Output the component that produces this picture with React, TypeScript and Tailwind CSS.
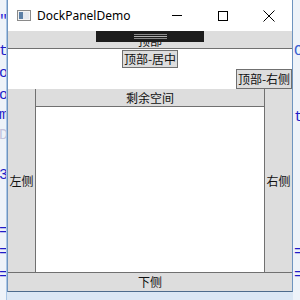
const cjk = "font-['Microsoft_YaHei','Noto_Sans_CJK_SC',sans-serif]"

function Btn({ label, className = '' }: { label: string; className?: string }) {
  return (
    <div
      className={`flex items-center justify-center bg-[#dddddd] text-[12px] leading-none text-[#111] ${cjk} ${className}`}
    >
      {label}
    </div>
  )
}

function CodeStrip({ side }: { side: 'left' | 'right' }) {
  const bits =
    side === 'left'
      ? [
          { t: '"', y: 14, c: 'text-[#2b2bd6]' },
          { t: 't', y: 44, c: 'text-[#1e1ec8]' },
          { t: 'o', y: 66, c: 'text-[#1e1ec8]' },
          { t: 'o', y: 88, c: 'text-[#1e1ec8]' },
          { t: 'm', y: 108, c: 'text-[#1e1ec8]' },
          { t: 'D', y: 128, c: 'text-[#c4c4dc]' },
          { t: '3', y: 168, c: 'text-[#1e1ec8]' },
          { t: '=', y: 224, c: 'text-[#1e1ec8]' },
          { t: '=', y: 245, c: 'text-[#1e1ec8]' },
          { t: '=', y: 268, c: 'text-[#1e1ec8]' },
        ]
      : [
          { t: 'O', y: 44, c: 'text-[#3a5fd0]' },
          { t: 't', y: 110, c: 'text-[#1e1ec8]' },
          { t: '=', y: 245, c: 'text-[#1e1ec8]' },
          { t: '=', y: 268, c: 'text-[#1e1ec8]' },
        ]
  return (
    <div
      className={`relative h-[300px] w-[7px] overflow-hidden bg-[#eef3f9] ${
        side === 'left' ? 'border-r border-[#a9c6e6]' : ''
      }`}
    >
      {bits.map((b, i) => (
        <span
          key={i}
          className={`absolute text-[15px] leading-none font-['Liberation_Mono',monospace] ${b.c} ${
            side === 'left' ? 'right-[-2px]' : 'left-[1px]'
          }`}
          style={{ top: b.y }}
        >
          {b.t}
        </span>
      ))}
    </div>
  )
}

function TitleBar() {
  return (
    <div className="flex h-[31px] items-center bg-white">
      <svg width="14" height="11" viewBox="0 0 14 11" className="ml-[9px]">
        <rect x="0.5" y="0.5" width="13" height="10" fill="#f4f4f4" stroke="#8a8a8a" />
        <rect x="2" y="2" width="4" height="7" fill="#5b7fa6" />
        <rect x="6" y="2" width="6" height="7" fill="#e4e8ee" />
      </svg>
      <span className="ml-[6px] text-[12px] text-black font-['Noto_Sans',sans-serif]">
        DockPanelDemo
      </span>
      <div className="ml-auto flex h-full">
        <div className="flex w-[46px] items-center justify-center">
          <div className="h-px w-[10px] bg-black" />
        </div>
        <div className="flex w-[46px] items-center justify-center">
          <div className="h-[10px] w-[10px] border border-black" />
        </div>
        <div className="flex w-[46px] items-center justify-center">
          <svg width="12" height="12" viewBox="0 0 12 12">
            <path d="M0.5 0.5L11.5 11.5M11.5 0.5L0.5 11.5" stroke="#000" strokeWidth="1" />
          </svg>
        </div>
      </div>
    </div>
  )
}

export default function App() {
  return (
    <div className="flex h-[300px] w-[300px] overflow-hidden bg-[#eef3f9]">
      <CodeStrip side="left" />
      <div className="flex w-[286px] flex-col">
        <div className="flex h-[292px] flex-col border-x border-b border-x-[#6e94bf] border-b-[#4d6b8c] bg-white">
          <TitleBar />
          <div className="flex h-[260px] flex-col">
            <div className="relative h-[18px] border-b border-[#707070] bg-[#dddddd]">
              <Btn label="顶部" className="h-full bg-transparent pt-[2px]" />
              <div className="absolute left-[88px] top-0 flex h-[11px] w-[108px] flex-col items-center justify-center gap-px bg-[#1c1c1c]">
                <div className="h-px w-[33px] bg-[#8a8a8a]" />
                <div className="h-px w-[33px] bg-[#b0b0b0]" />
                <div className="h-px w-[33px] bg-[#8a8a8a]" />
              </div>
            </div>
            <div className="flex h-[20px] justify-center pt-px">
              <Btn label="顶部-居中" className="h-[18px] w-[56px] border border-[#707070]" />
            </div>
            <div className="flex h-[20px] justify-end">
              <Btn label="顶部-右侧" className="h-[20px] w-[56px] border border-[#707070]" />
            </div>
            <div className="flex h-[183px]">
              <Btn label="左侧" className="w-[28px] border-r border-[#707070]" />
              <div className="flex flex-1 flex-col">
                <Btn label="剩余空间" className="h-[18px] border-b border-[#707070]" />
                <div className="flex-1 bg-white" />
              </div>
              <Btn label="右侧" className="w-[28px] border-l border-[#707070]" />
            </div>
            <Btn label="下侧" className="h-[19px] border-t border-[#707070]" />
          </div>
        </div>
        <div className="flex-1 bg-[#dbe7f4]" />
      </div>
      <CodeStrip side="right" />
    </div>
  )
}
